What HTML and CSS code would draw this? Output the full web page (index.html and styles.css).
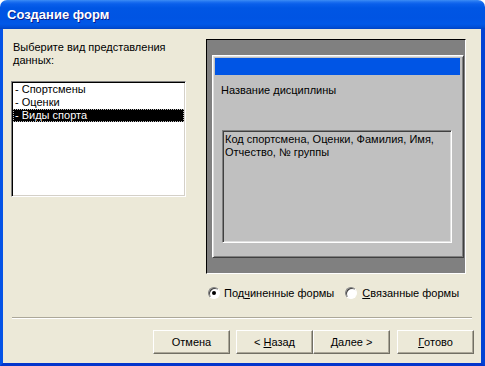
FILE: index.html
```html
<!DOCTYPE html>
<html lang="ru">
<head>
<meta charset="utf-8">
<title>Создание форм</title>
<link rel="stylesheet" href="styles.css">
</head>
<body>
<div class="window">
  <div class="titlebar"><span class="title">Создание форм</span></div>
  <div class="client">
    <div class="main">
      <div class="left">
        <div class="prompt">Выберите вид представления<br>данных:</div>
        <div class="listbox">
          <div class="item">- Спортсмены</div>
          <div class="item">- Оценки</div>
          <div class="item selected">- Виды спорта</div>
        </div>
      </div>
      <div class="right">
        <div class="preview">
          <div class="form">
            <div class="formbar"></div>
            <div class="fieldname">Название дисциплины</div>
            <div class="subform">Код спортсмена, Оценки, Фамилия, Имя,<br>Отчество, № группы</div>
          </div>
        </div>
        <div class="radios">
          <div class="radio first"><span class="circle checked"></span><span>Под<u>ч</u>иненные формы</span></div>
          <div class="radio second"><span class="circle"></span><span><u>С</u>вязанные формы</span></div>
        </div>
      </div>
    </div>
    <div class="separator"></div>
    <div class="buttons">
      <div class="btn cancel">Отмена</div>
      <div class="btn back">&lt; <u>Н</u>азад</div>
      <div class="btn next"><u>Д</u>алее &gt;</div>
      <div class="btn done"><u>Г</u>отово</div>
    </div>
  </div>
</div>
</body>
</html>
```
FILE: styles.css
```css
body {
  margin: 0;
  background: #ffffff;
  font-family: "Liberation Sans", Arial, sans-serif;
  font-size: 11px;
  line-height: 13px;
  color: #000;
}

.window {
  width: 485px;
  height: 366px;
  display: flex;
  flex-direction: column;
}

.titlebar {
  height: 29px;
  flex: none;
  box-sizing: border-box;
  border-radius: 7px 7px 0 0;
  background: linear-gradient(to bottom, #3d8df5 0px, #1c70f0 2px, #0a5fea 4px, #0056e4 8px, #0054e3 18px, #0058e8 24px, #004fd8 27px, #0043c4 29px);
  display: flex;
  align-items: center;
  padding-left: 7px;
}

.title {
  color: #fff;
  font-weight: bold;
  font-size: 13px;
  line-height: 16px;
  padding-top: 1px;
  text-shadow: 1px 1px #0a1c8a;
}

.client {
  flex: 1;
  display: flex;
  flex-direction: column;
  background: #ece9d8;
  border-style: solid;
  border-width: 0 4px 3px 3px;
  border-color: #0553e6 #0342d4 #0335cc #0553e6;
}

.main {
  display: flex;
  padding-top: 10px;
}

.left {
  width: 175px;
  margin-left: 8px;
  flex: none;
}

.prompt {
  margin: 2px 0 0 2px;
  white-space: nowrap;
}

.listbox {
  margin-top: 14px;
  height: 116px;
  box-sizing: border-box;
  background: #fff;
  border: 1px solid;
  border-color: #808080 #ffffff #ffffff #808080;
  box-shadow: inset 1px 1px #000, inset -1px -1px #d4d0c8;
  padding: 1px;
}

.item {
  height: 13px;
  padding-left: 2px;
  white-space: nowrap;
}

.item.selected {
  background: #000;
  color: #fff;
  outline: 1px dotted #bdbdbd;
  outline-offset: -1px;
}

.right {
  margin-left: 20px;
  width: 260px;
  flex: none;
}

.preview {
  height: 235px;
  box-sizing: border-box;
  background: #808080;
  border: 1px solid;
  border-color: #000 #fff #fff #000;
  padding: 15px 1px 15px 5px;
}

.form {
  height: 100%;
  box-sizing: border-box;
  background: #c0c0c0;
  border: 1px solid;
  border-color: #ffffff #404040 #404040 #ffffff;
  box-shadow: inset 1px 1px #dfdfdf, inset -1px -1px #808080;
  padding: 2px 3px 0 2px;
}

.formbar {
  height: 17px;
  background: #0055e5;
}

.fieldname {
  margin: 9px 0 0 6px;
}

.subform {
  margin: 33px 0 0 7px;
  width: 230px;
  height: 113px;
  box-sizing: border-box;
  border: 1px solid;
  border-color: #808080 #ffffff #ffffff #808080;
  box-shadow: inset 1px 1px #404040, inset -1px -1px #dfdfdf;
  padding: 2px;
  white-space: nowrap;
}

.radios {
  display: flex;
  align-items: center;
  height: 14px;
  margin-top: 12px;
}

.radio {
  display: flex;
  align-items: center;
  white-space: nowrap;
}

.radio.first {
  margin-left: 2px;
}

.radio.second {
  margin-left: 11px;
}

.circle {
  width: 12px;
  height: 12px;
  box-sizing: border-box;
  border-radius: 50%;
  background: #fff;
  border: 1px solid;
  border-color: #808080 #ffffff #ffffff #808080;
  box-shadow: inset 1px 1px #404040;
  margin-right: 4px;
  display: flex;
  align-items: center;
  justify-content: center;
}

.radio.second .circle {
  margin-right: 5px;
}

.circle.checked::after {
  content: "";
  width: 4px;
  height: 4px;
  border-radius: 50%;
  background: #000;
}

.separator {
  margin: 17px 9px 0 9px;
  border-top: 1px solid #aca899;
  border-bottom: 1px solid #ffffff;
}

.buttons {
  display: flex;
  justify-content: flex-end;
  padding-right: 7px;
  margin-top: 11px;
}

.btn {
  width: 77px;
  height: 24px;
  box-sizing: border-box;
  display: flex;
  align-items: center;
  justify-content: center;
  background: #ece9d8;
  border: 1px solid;
  border-color: #ffffff #716f64 #716f64 #ffffff;
  box-shadow: inset -1px -1px #aca899;
  white-space: pre;
}

.btn.cancel {
  margin-right: 6px;
}

.btn.next {
  margin-right: 7px;
}
```
